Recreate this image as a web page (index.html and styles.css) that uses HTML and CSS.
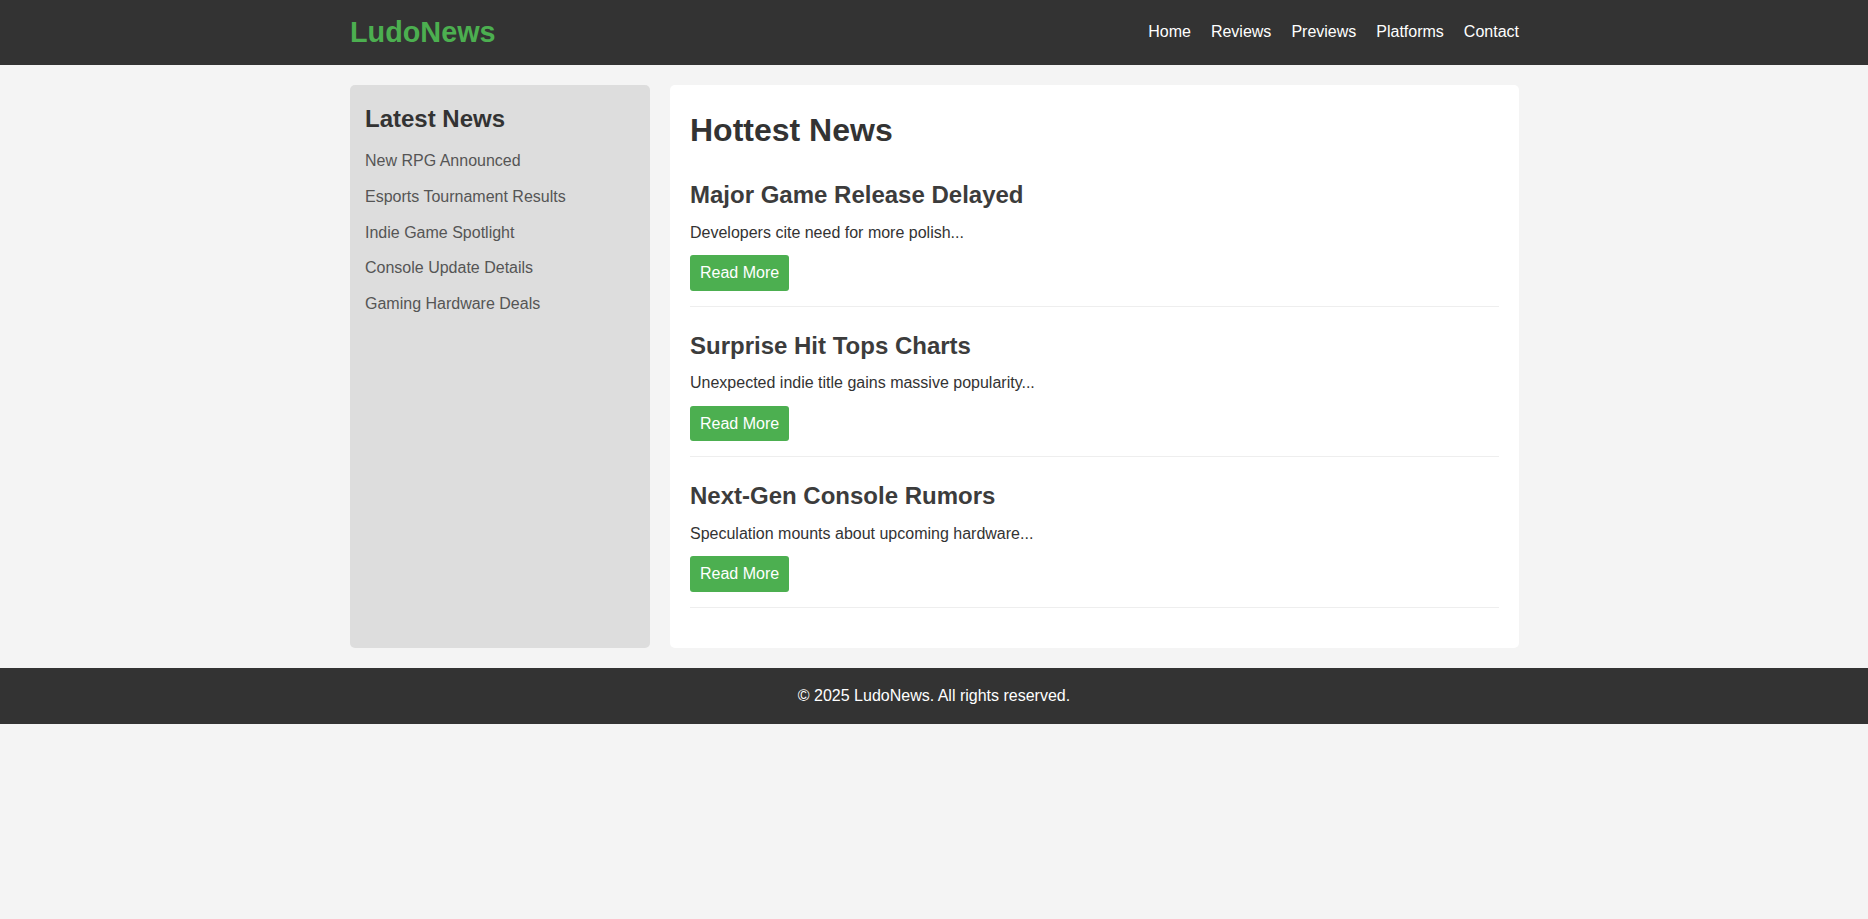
FILE: index.html
```html
<!DOCTYPE html>
<html lang="en">
<head>
<meta charset="utf-8">
<title>LudoNews</title>
<link rel="stylesheet" href="styles.css">
</head>
<body>
<header class="site-header">
  <div class="container header-inner">
    <a class="logo" href="#">LudoNews</a>
    <nav class="nav">
      <a href="#">Home</a>
      <a href="#">Reviews</a>
      <a href="#">Previews</a>
      <a href="#">Platforms</a>
      <a href="#">Contact</a>
    </nav>
  </div>
</header>

<div class="container layout">
  <aside class="sidebar">
    <h2 class="sidebar-title">Latest News</h2>
    <ul class="sidebar-list">
      <li><a href="#">New RPG Announced</a></li>
      <li><a href="#">Esports Tournament Results</a></li>
      <li><a href="#">Indie Game Spotlight</a></li>
      <li><a href="#">Console Update Details</a></li>
      <li><a href="#">Gaming Hardware Deals</a></li>
    </ul>
  </aside>

  <main class="main">
    <h1 class="main-title">Hottest News</h1>
    <article class="article">
      <h2 class="article-title">Major Game Release Delayed</h2>
      <p class="article-text">Developers cite need for more polish...</p>
      <a class="btn" href="#">Read More</a>
    </article>
    <article class="article">
      <h2 class="article-title">Surprise Hit Tops Charts</h2>
      <p class="article-text">Unexpected indie title gains massive popularity...</p>
      <a class="btn" href="#">Read More</a>
    </article>
    <article class="article">
      <h2 class="article-title">Next-Gen Console Rumors</h2>
      <p class="article-text">Speculation mounts about upcoming hardware...</p>
      <a class="btn" href="#">Read More</a>
    </article>
  </main>
</div>

<footer class="site-footer">
  <p class="footer-text">&copy; 2025 LudoNews. All rights reserved.</p>
</footer>
</body>
</html>
```

FILE: styles.css
```css
* {
  box-sizing: border-box;
}

body {
  margin: 0;
  font-family: "Liberation Sans", Arial, sans-serif;
  font-size: 16px;
  line-height: 1.6;
  color: #333;
  background: #f4f4f4;
}

.container {
  max-width: 1170px;
  margin: 0 auto;
}

.site-header {
  background: #333;
  padding: 16px 0;
}

.header-inner {
  display: flex;
  align-items: center;
  justify-content: space-between;
  padding-left: 1px;
}

.logo {
  color: #4caf50;
  font-size: 28.8px;
  font-weight: bold;
  line-height: 33px;
  text-decoration: none;
}

.nav {
  display: flex;
  gap: 20px;
  margin-bottom: 2px;
}

.nav a {
  color: #fff;
  text-decoration: none;
}

.layout {
  display: flex;
  gap: 20px;
  margin-top: 20px;
  margin-bottom: 20px;
  padding-left: 1px;
}

.sidebar {
  flex: 0 0 300px;
  background: #ddd;
  border-radius: 5px;
  padding: 15px;
}

.sidebar-title {
  font-size: 24px;
  margin: 0 0 10px;
  color: #333;
}

.sidebar-list {
  list-style: none;
  margin: 0;
  padding: 0;
}

.sidebar-list li {
  margin-bottom: 10px;
}

.sidebar-list a {
  color: #555;
  text-decoration: none;
}

.main {
  flex: 1;
  background: #fff;
  border-radius: 5px;
  padding: 20px;
}

.main-title {
  font-size: 32px;
  margin: 0 0 20px;
  color: #333;
}

.article {
  border-bottom: 1px solid #eee;
  padding-bottom: 15px;
  margin-bottom: 20px;
}

.article-title {
  font-size: 24px;
  margin: 0 0 5px;
  color: #3c3c3c;
}

.article-text {
  margin: 0 0 10px;
}

.btn {
  display: inline-block;
  background: #4caf50;
  color: #fff;
  text-decoration: none;
  padding: 5px 10px;
  border-radius: 3px;
  vertical-align: top;
}

.site-footer {
  background: #333;
  color: #fff;
  text-align: center;
  padding: 15px 0;
}

.footer-text {
  margin: 0;
}
```
